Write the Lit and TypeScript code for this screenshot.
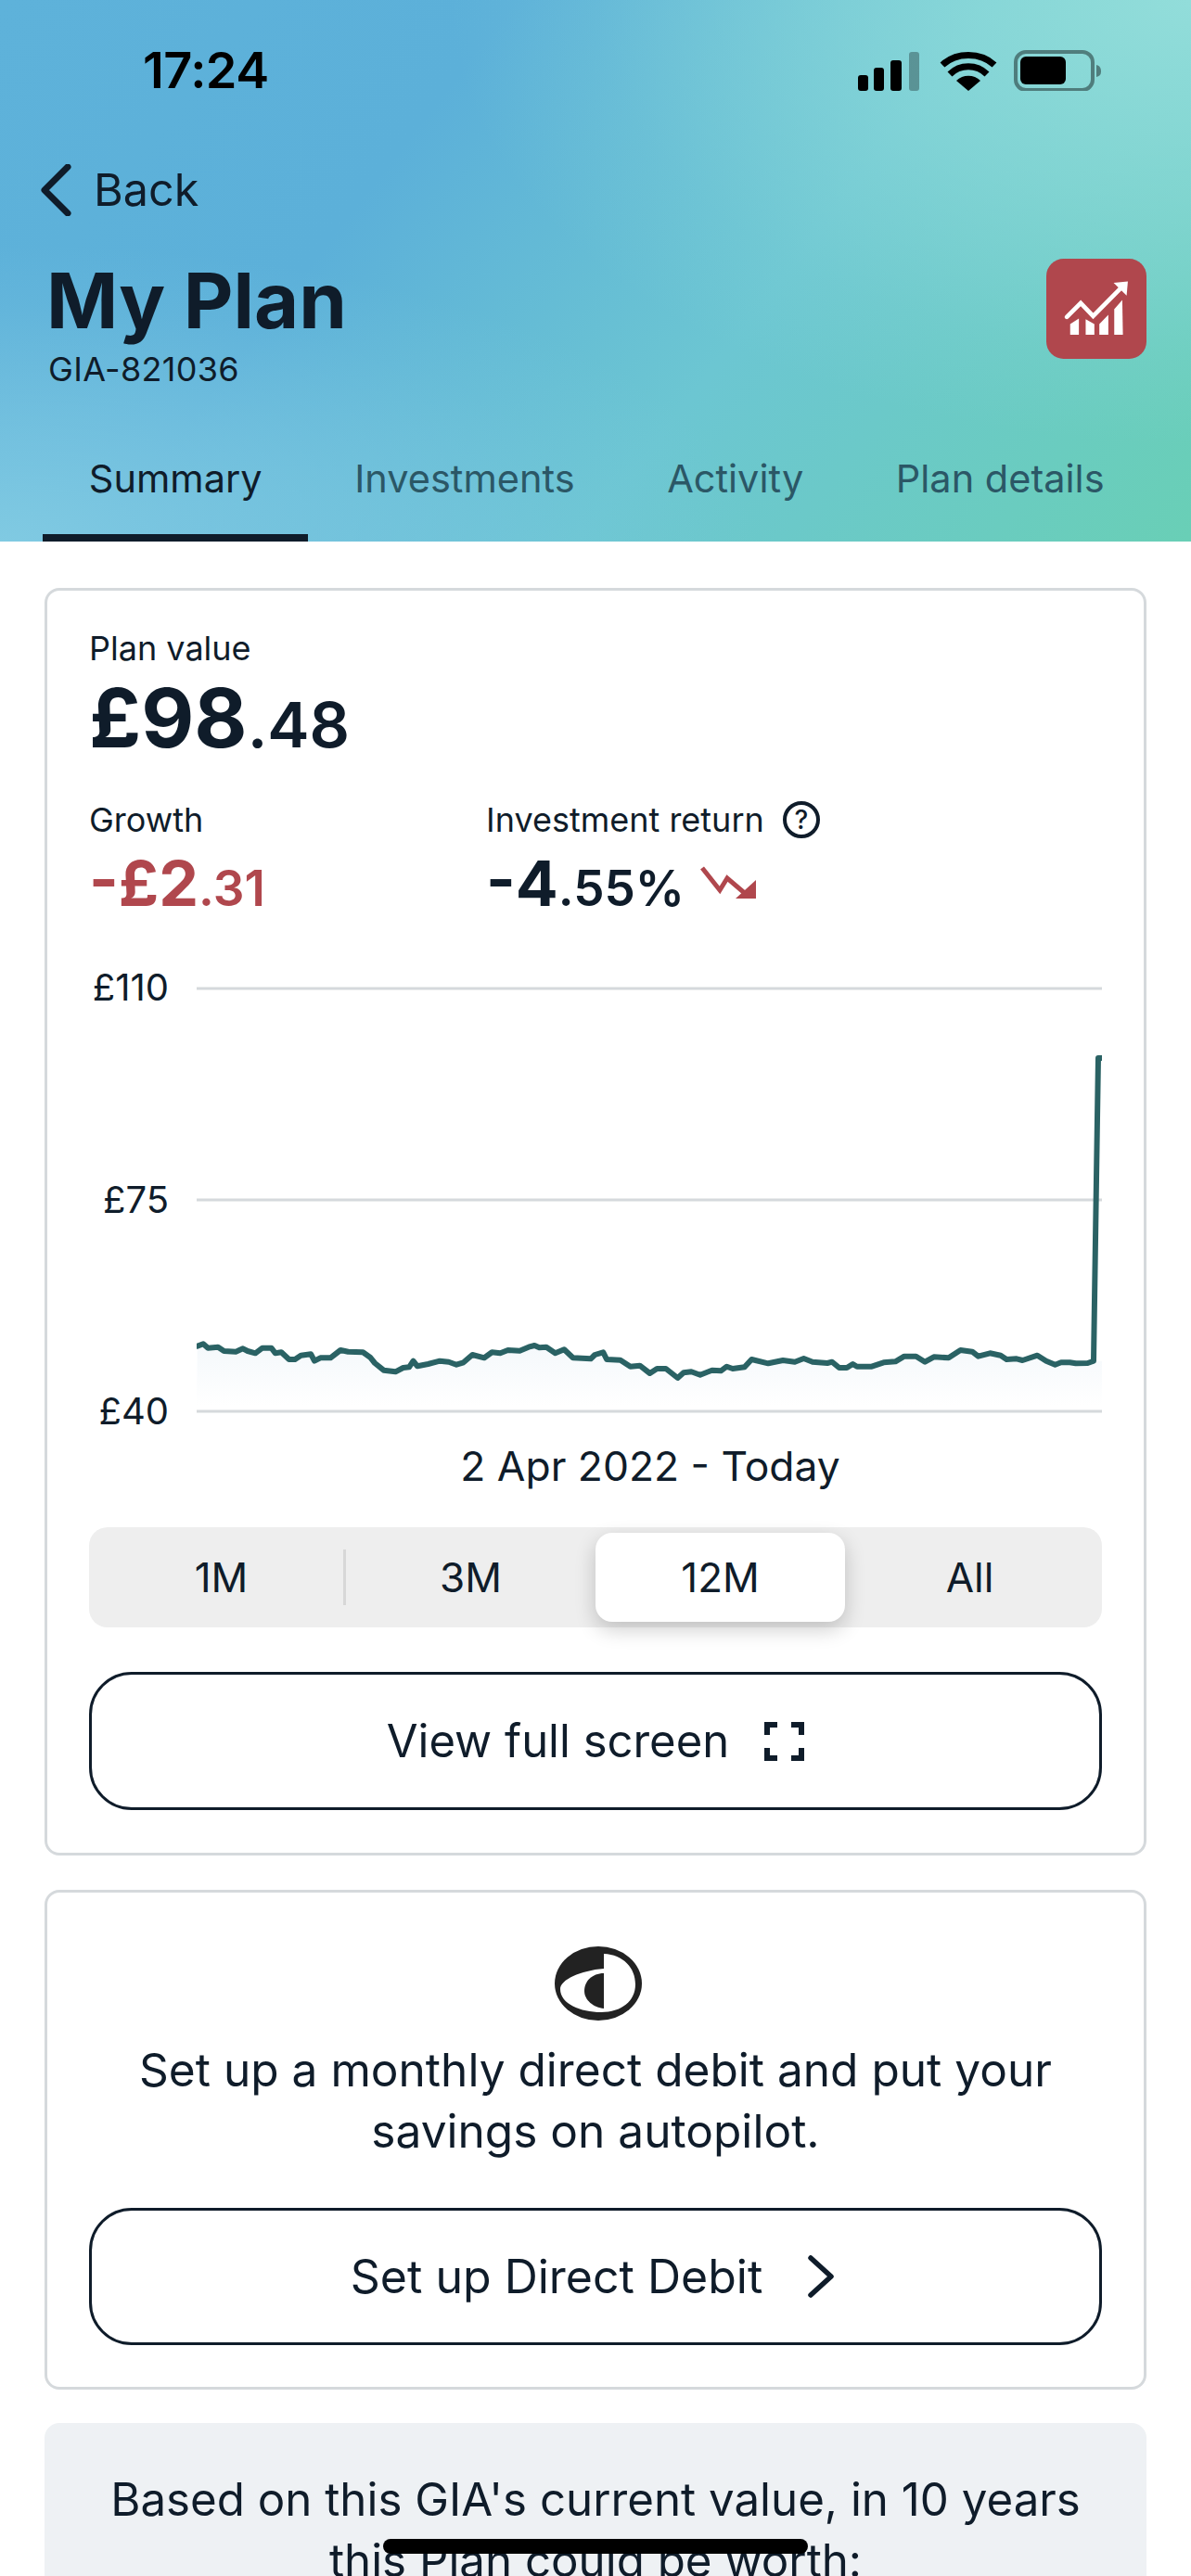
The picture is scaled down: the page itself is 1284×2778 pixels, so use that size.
import { LitElement, html, css, svg } from "lit";
import { customElement } from "lit/decorators.js";

// Chart trace sampled in px of the plot area (original 1284-wide canvas minus plot origin).
const RAW: [number, number][] = [[20,152],[30,145],[38,158],[55,155],[65,168],[85,170],[97,160],[105,168],[118,175],[130,158],[145,158],[152,175],[162,172],[175,195],[185,195],[195,182],[212,178],[218,200],[228,190],[245,190],[262,165],[275,170],[300,172],[312,188],[320,207],[335,230],[355,235],[368,222],[378,220],[385,200],[392,217],[410,210],[430,200],[445,203],[458,212],[470,205],[485,180],[505,190],[518,172],[532,175],[545,165],[565,167],[580,155],[590,150],[598,157],[610,155],[625,175],[640,163],[655,190],[685,193],[692,180],[706,172],[712,195],[735,197],[752,218],[768,215],[785,240],[797,225],[812,225],[832,255],[842,238],[855,235],[870,245],[890,230],[905,232],[915,218],[925,225],[945,220],[957,195],[985,208],[1010,198],[1030,203],[1045,192],[1060,203],[1085,207],[1093,203],[1105,222],[1118,222],[1128,210],[1135,218],[1160,218],[1180,205],[1200,202],[1215,185],[1235,185],[1250,203],[1265,187],[1290,190],[1310,165],[1330,170],[1340,185],[1360,175],[1378,182],[1388,195],[1405,193],[1415,198],[1440,182],[1455,200],[1470,212],[1480,205],[1495,205],[1505,208],[1525,207],[1535,200]];
const PLOT_X = 212;
const PLOT_Y = 1063;
const base = RAW.map(([x, y]) => [200 + x / 1.568 - PLOT_X, 1400 + y / 3 - PLOT_Y]);
const linePts = [...base, [1184 - PLOT_X, 1140 - PLOT_Y], [1187 - PLOT_X, 1140 - PLOT_Y]];
const toStr = (p: number[][]) => p.map(([x, y]) => `${x.toFixed(1)},${y.toFixed(1)}`).join(" ");
const areaPts = [...base, [976, base[base.length - 1][1]], [976, 452], [0, 452]];
const GRID = [2, 230, 458];

const RANGES = ["1M", "3M", "12M", "All"];
const TABS = ["Summary", "Investments", "Activity", "Plan details"];

@customElement("app-root")
export class AppRoot extends LitElement {
  static styles = css`
    :host {
      display: block;
      position: relative;
      width: 1284px;
      height: 2778px;
      overflow: hidden;
      background: #fff;
      font-family: Inter, "Liberation Sans", sans-serif;
      color: #0f1c2a;
    }
    * { box-sizing: border-box; }
    .hero {
      height: 584px;
      background:
        radial-gradient(ellipse 800px 480px at 100% 0, rgba(146, 221, 218, 1) 0, rgba(146, 221, 218, 0.55) 45%, rgba(146, 221, 218, 0.15) 80%, rgba(146, 221, 218, 0) 100%),
        radial-gradient(ellipse 820px 320px at 0 100%, rgba(128, 202, 226, 1) 0, rgba(128, 202, 226, 0.55) 45%, rgba(128, 202, 226, 0.15) 80%, rgba(128, 202, 226, 0) 100%),
        linear-gradient(128deg, #5eb2da 0%, #5cb0d9 32%, #6cc6d2 62%, #69cfb6 100%);
    }
    .status { height: 152px; display: flex; align-items: center; justify-content: space-between; padding: 0 97px 0 154px; }
    .time { font-size: 54px; font-weight: 600; color: #000; line-height: 1; letter-spacing: -0.5px; }
    .status-icons { display: block; }
    .back { margin-top: 25px; height: 56px; padding-left: 42px; display: flex; align-items: center; gap: 23px; font-size: 48.5px; line-height: 56px; }
    .back svg { display: block; }
    .title-row { margin-top: 46px; padding: 0 48px 0 50px; display: flex; justify-content: space-between; align-items: flex-start; }
    h1 { margin: 0; font-size: 83px; line-height: 91px; font-weight: 700; }
    .code { margin-top: 6px; font-size: 36px; line-height: 44px; letter-spacing: 0.3px; padding-left: 2px; }
    .badge { width: 108px; height: 108px; display: block; }
    .tabs { margin-top: 66px; padding-left: 46px; display: flex; }
    .tab { padding: 0 49.8px; height: 98px; line-height: 60px; font-size: 41.5px; color: #2b5766; white-space: nowrap; }
    .tab.active { color: #0f1c2a; border-bottom: 8px solid #0f1c2a; }

    .card { margin: 0 48px; border: 3px solid #d5d9dc; border-radius: 16px; background: #fff; padding: 0 45px; }
    .plan { margin-top: 50px; padding-top: 37px; padding-bottom: 46px; }
    .label { font-size: 36px; line-height: 50px; }
    .big { margin-top: 5px; font-size: 88px; line-height: 90px; font-weight: 700; }
    .big small { font-size: 68px; font-weight: 600; }
    .stats { margin-top: 33px; display: flex; }
    .stat-a { width: 428px; }
    .with-help { display: flex; align-items: center; gap: 20px; }
    .help { width: 40px; height: 40px; border: 4px solid #0f1c2a; border-radius: 50%; display: flex; align-items: center; justify-content: center; font-size: 28px; font-weight: 500; line-height: 1; }
    .mid { margin-top: 8px; font-size: 68px; line-height: 70px; font-weight: 700; white-space: nowrap; display: flex; align-items: center; }
    .mid small { font-size: 53px; font-weight: 600; }
    .neg { color: #b0474d; }
    .mid svg { margin-left: 17px; margin-top: -8px; display: block; }
    .chart { margin-top: 47px; display: flex; gap: 30px; height: 507px; }
    .axis { width: 86px; display: flex; flex-direction: column; justify-content: space-between; text-align: right; font-size: 40px; line-height: 50px; }
    .plot { margin-top: 24px; display: block; }
    .range-date { margin-top: 9px; text-align: center; font-size: 44.4px; line-height: 50px; padding-left: 118px; }
    .seg { margin-top: 41px; height: 108px; background: #eeeeee; border-radius: 20px; padding: 6px 8px; display: grid; grid-template-columns: repeat(4, 1fr); }
    .seg div { position: relative; display: flex; align-items: center; justify-content: center; font-size: 44px; border-radius: 18px; }
    .seg .on { background: #fff; box-shadow: 0 8px 22px rgba(0, 0, 0, 0.2); }
    .seg .sep::after { content: ""; position: absolute; right: 0; top: 18px; bottom: 18px; width: 3px; background: #d7d7d7; }
    .btn { margin-top: 48px; height: 149px; border: 3px solid #0f1c2a; border-radius: 46px; display: flex; align-items: center; justify-content: center; gap: 38px; font-size: 49px; background: #fff; }
    .btn svg { display: block; }
    .dd { margin-top: 37px; padding-top: 58px; padding-bottom: 45px; text-align: center; }
    .dd-logo { display: block; margin: 0 0 0 502px; }
    .dd p { margin: 20px 0 0; font-size: 49.6px; line-height: 66px; }
    .dd .btn { margin-top: 50px; height: 148px; font-size: 50px; gap: 48px; padding-right: 6px; }
    .forecast { margin: 36px 48px 0; padding: 49px 40px 0; height: 400px; background: #eef1f4; border-radius: 16px; text-align: center; font-size: 49.25px; line-height: 66px; }
    .home { position: absolute; left: 413px; top: 2738px; width: 458px; height: 16px; border-radius: 8px; background: #000; }
  `;

  render() {
    return html`
      <section class="hero">
        <div class="status">
          <span class="time">17:24</span>
          <svg class="status-icons" width="262" height="44" viewBox="0 0 262 44">
            <g fill="#000">
              <rect x="0" y="27" width="11" height="17" rx="3"></rect>
              <rect x="17" y="19" width="11" height="25" rx="3"></rect>
              <rect x="35" y="11" width="12" height="33" rx="3"></rect>
            </g>
            <rect x="55" y="2" width="11" height="42" rx="3" fill="#000" opacity="0.3"></rect>
            <g fill="none" stroke="#000" stroke-width="7">
              <path d="M91 16 C106 2 132 2 147 16"></path>
              <path d="M99 26 C110 15 128 15 139 26"></path>
            </g>
            <path d="M106 33 C113 26 125 26 132 33 L119 44 Z" fill="#000"></path>
            <rect x="170" y="2" width="83" height="41" rx="11" fill="none" stroke="#000" stroke-opacity="0.42" stroke-width="4"></rect>
            <path d="M257 16 C261 17 262 20 262 23 C262 26 261 28 257 29 Z" fill="#000" fill-opacity="0.42"></path>
            <rect x="175" y="7" width="49" height="30" rx="6" fill="#000"></rect>
          </svg>
        </div>
        <div class="back">
          <svg width="36" height="56" viewBox="0 0 36 56">
            <path d="M31 3 L6 28 L31 53" fill="none" stroke="#0f1c2a" stroke-width="7" stroke-linecap="round" stroke-linejoin="round"></path>
          </svg>
          <span>Back</span>
        </div>
        <div class="title-row">
          <div>
            <h1>My Plan</h1>
            <div class="code">GIA-821036</div>
          </div>
          <svg class="badge" viewBox="145 747 323 323">
            <rect x="145" y="747" width="323" height="323" rx="56" fill="#b0474d"></rect>
            <g fill="#fff">
              <path d="M222 992 V958 L250 940 V992 Z"></path>
              <path d="M272 992 V942 L300 958 V992 Z"></path>
              <path d="M316 992 V958 L345 928 V992 Z"></path>
              <path d="M364 992 V910 L390 880 L392 992 Z"></path>
              <path d="M362 825 L408 820 L404 866 Z"></path>
            </g>
            <path d="M211 935 L256 890 L296 932 L384 843" fill="none" stroke="#fff" stroke-width="14" stroke-linecap="round" stroke-linejoin="miter"></path>
          </svg>
        </div>
        <nav class="tabs">
          ${TABS.map((t, i) => html`<div class="tab ${i === 0 ? "active" : ""}">${t}</div>`)}
        </nav>
      </section>

      <section class="card plan">
        <div class="label">Plan value</div>
        <div class="big">£98<small>.48</small></div>
        <div class="stats">
          <div class="stat-a">
            <div class="label">Growth</div>
            <div class="mid neg"><span>-£2<small>.31</small></span></div>
          </div>
          <div>
            <div class="label with-help"><span>Investment return</span><span class="help">?</span></div>
            <div class="mid">
              <span>-4<small>.55%</small></span>
              <svg width="60" height="36" viewBox="0 0 60 36">
                <path d="M2 3 L21 27 L29 14 L50 32" fill="none" stroke="#b0474d" stroke-width="5"></path>
                <path d="M60 36 V16 L38 36 Z" fill="#b0474d"></path>
              </svg>
            </div>
          </div>
        </div>
        <div class="chart">
          <div class="axis"><span>£110</span><span>£75</span><span>£40</span></div>
          <svg class="plot" width="976" height="462" viewBox="0 0 976 462">
            <defs>
              <linearGradient id="fade" x1="0" y1="0" x2="0" y2="1">
                <stop offset="0" stop-color="#f4f8fb"></stop>
                <stop offset="1" stop-color="#ffffff"></stop>
              </linearGradient>
            </defs>
            ${GRID.map((y) => svg`<line x1="0" x2="976" y1=${y} y2=${y} stroke="#d5d9dc" stroke-width="3"></line>`)}
            <polygon points=${toStr(areaPts)} fill="url(#fade)"></polygon>
            <polyline points=${toStr(linePts)} fill="none" stroke="#2a6264" stroke-width="6" stroke-linejoin="round" stroke-linecap="round"></polyline>
          </svg>
        </div>
        <div class="range-date">2 Apr 2022 - Today</div>
        <div class="seg">
          ${RANGES.map((r, i) => html`<div class="${i === 2 ? "on" : ""} ${i === 0 ? "sep" : ""}">${r}</div>`)}
        </div>
        <div class="btn">
          <span>View full screen</span>
          <svg width="43" height="42" viewBox="0 0 43 42">
            <path d="M3 14 V3 H14 M29 3 H40 V14 M40 28 V39 H29 M14 39 H3 V28" fill="none" stroke="#0f1c2a" stroke-width="6"></path>
          </svg>
        </div>
      </section>

      <section class="card dd">
        <svg class="dd-logo" width="94" height="80" viewBox="0 0 94 80">
          <ellipse cx="47" cy="40" rx="47" ry="40" fill="#222"></ellipse>
          <path d="M53 8 C74 9 87 23 87 41 C87 59 72 71 50 71 C28 71 6 62 6 46 C6 36 28 26 53 24 Z" fill="#fff"></path>
          <path d="M53 29 C40 29 32 38 32 48 C32 58 42 66 53 67 Z" fill="#222"></path>
        </svg>
        <p>Set up a monthly direct debit and put your<br />savings on autopilot.</p>
        <div class="btn">
          <span>Set up Direct Debit</span>
          <svg width="30" height="46" viewBox="0 0 30 46">
            <path d="M4 3 L26 23 L4 43" fill="none" stroke="#0f1c2a" stroke-width="5.5" stroke-linecap="round" stroke-linejoin="round"></path>
          </svg>
        </div>
      </section>

      <section class="forecast">Based on this GIA's current value, in 10 years<br />this Plan could be worth:</section>
      <div class="home"></div>
    `;
  }
}
